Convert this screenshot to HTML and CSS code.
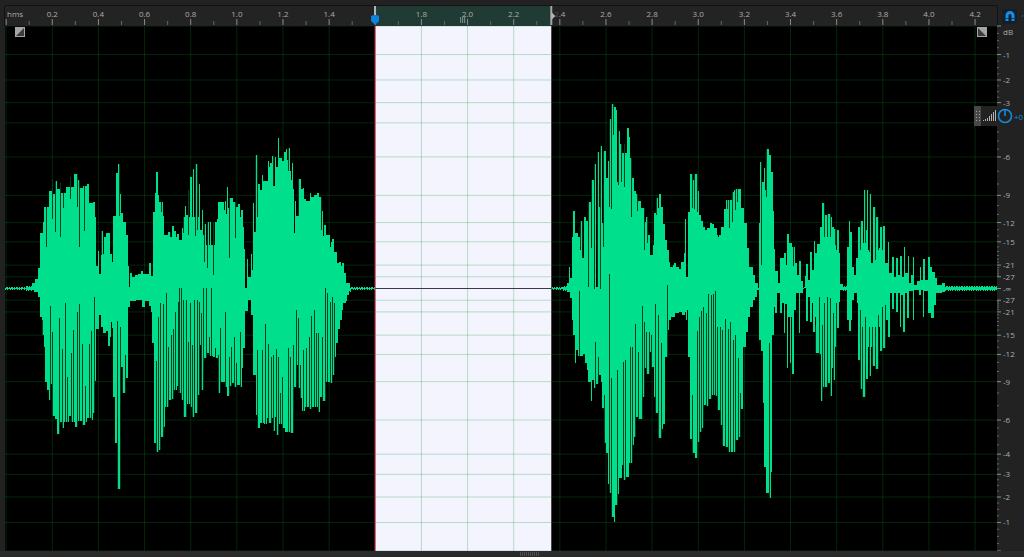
FILE: index.html
```html
<!DOCTYPE html>
<html lang="en">
  <head>
    <meta charset="UTF-8" />
    <title>Waveform editor</title>
    <link rel="stylesheet" href="styles.css">
  </head>
  <body>
    <main class="editor">
      <svg class="ruler" id="ruler" role="img" aria-label="Time ruler"></svg>

      <div class="corner">
        <button class="snap" aria-label="Toggle snapping">
          <svg width="12" height="12" viewBox="0 0 12 12">
            <path d="M3 11V5.500a3 3 0 0 1 6 0V11" fill="none" stroke="#168ee8" stroke-width="3" />
            <path d="M1 8.500h10" stroke="#13202b" stroke-width="0.6" />
          </svg>
        </button>
        <span class="corner-mark">‘</span>
      </div>

      <section class="plot">
        <svg class="layer" id="back"></svg>
        <svg class="layer" id="wave" viewBox="5 26 992 525" preserveAspectRatio="none" role="img" aria-label="Audio waveform"></svg>
        <svg class="layer" id="grid"></svg>
        <button class="fade fade-in" aria-label="Fade in">
          <svg width="10" height="10" viewBox="0 0 10 10"><path d="M0 0h10v10H0z" fill="#a5a5a5" /><path d="M9 1v8H1z" fill="#3c3c3c" /></svg>
        </button>
        <button class="fade fade-out" aria-label="Fade out">
          <svg width="10" height="10" viewBox="0 0 10 10"><path d="M0 0h10v10H0z" fill="#a5a5a5" /><path d="M1 1v8h8z" fill="#3c3c3c" /></svg>
        </button>
      </section>

      <svg class="scale" id="scale" role="img" aria-label="Decibel scale"></svg>

      <footer class="bottom">
        <svg width="19" height="4" viewBox="0 0 19 4">
          <path d="M0 1h19M0 3h19" stroke="#777" stroke-dasharray="1 1" />
        </svg>
      </footer>

      <div class="hud">
        <span class="hud-grip">
          <svg width="4" height="10" viewBox="0 0 4 10"><path d="M.5 0v10M3.500 0v10" stroke="#a0a0a0" stroke-dasharray="1 2" /></svg>
        </span>
        <span class="hud-level">
          <svg width="14" height="12" viewBox="0 0 14 12"><path d="M1.500 12v-1M3.500 12v-2M5.500 12v-3M7.500 12v-5M9.500 12v-7M11.500 12v-9M13.500 12V1" stroke="#b0b0b0" /></svg>
        </span>
        <button class="dial" aria-label="Adjust volume">
          <svg width="16" height="16" viewBox="0 0 16 16"><circle cx="8" cy="8" r="6.500" fill="none" stroke="#128ce0" stroke-width="1.600" /><path d="M8 2v6" stroke="#128ce0" stroke-width="1.600" /></svg>
        </button>
        <span class="gain">+0</span>
      </div>
    </main>

    <script src="wave.js"></script>
  </body>
</html>
```

FILE: styles.css
```css
* {
  box-sizing: border-box;
}

body {
  margin: 0;
  background-color: #222222;
  color: #a6a6a6;
  font-family: "Open Sans", "Noto Sans", sans-serif;
  font-size: 8px;
}

button {
  display: flex;
  align-items: center;
  justify-content: center;
  margin: 0;
  padding: 0;
  border: none;
  background: none;
}

.editor {
  position: relative;
  display: grid;
  grid-template-columns: 1fr 27px;
  grid-template-rows: 20px 1fr 6px;
  height: 100vh;
  padding: 6px 0 0 5px;
  overflow: hidden;
}

.ruler,
.scale {
  display: block;
  width: 100%;
  height: 100%;
  overflow: visible;
}

.ruler {
  background-color: #232323;
  box-shadow: 0 -1px #121212, -1px 0 #121212, 1px 0 #121212;
}

.ruler text,
.scale text {
  fill: #acacac;
}

.ruler text {
  text-anchor: middle;
}

.ruler .unit {
  text-anchor: start;
}

.tick {
  stroke: #8c8c8c;
}

.minor {
  stroke: #666666;
}

.corner {
  display: flex;
  align-items: center;
  gap: 5px;
  padding-left: 5px;
  overflow: hidden;
}

.snap {
  flex: none;
  width: 15px;
  height: 15px;
  border-radius: 2px;
  background-color: #13202b;
}

.corner-mark {
  color: #128ce0;
}

.plot {
  position: relative;
  background-color: #000000;
}

.layer {
  position: absolute;
  inset: 0;
  width: 100%;
  height: 100%;
}

.gridline {
  stroke: #00961e;
  stroke-opacity: 0.26;
}

.fade {
  position: absolute;
  top: 1px;
}

.fade-in {
  left: 10px;
}

.fade-out {
  right: 10px;
}

.bottom {
  grid-column: 1 / 3;
  display: flex;
  align-items: center;
  justify-content: center;
  padding-left: 34px;
  background-color: #2b2b2b;
  margin-left: -5px;
}

.hud {
  position: absolute;
  top: 106px;
  right: 0;
  display: flex;
  align-items: center;
  width: 50px;
  height: 20px;
  overflow: hidden;
  background-color: #222222;
}

.hud-grip {
  flex: none;
  display: flex;
  align-items: center;
  justify-content: center;
  width: 7px;
  height: 20px;
  background-color: #484848;
}

.hud-level {
  flex: none;
  padding-left: 1px;
}

.dial {
  flex: none;
  width: 18px;
}

.gain {
  flex: none;
  color: #128ce0;
}
```

FILE: wave.js
```js
const NS = "http://www.w3.org/2000/svg";
const DURATION = 4.3;
const SELECTION = [1.604, 2.368];

// outline of the wave: "x,y" steps, each one held until the next
const TOP = `5,287 26,286 32,283 35,279 38,268 40,233 43,222 44,207 49,191 52,179 53,194 55,181 57,189 60,183 61,193
66,187 70,177 71,187 74,174 77,180 79,188 83,186 87,184 89,203 93,202 95,217 96,266 98,251 99,274 101,231 103,254
104,237 106,233 110,254 112,262 113,216 116,173 118,164 120,194 121,213 123,222 126,235 128,266 129,287 130,273
132,277 135,275 138,274 141,271 143,274 149,263 151,276 153,212 155,193 156,172 158,195 159,202 161,202 163,216
164,235 168,232 170,237 172,226 174,231 176,237 177,234 179,240 182,228 183,217 185,206 186,215 188,190 189,217
190,177 192,217 193,169 194,217 196,164 197,217 199,184 200,230 202,210 203,235 205,224 206,245 208,222 209,245
210,222 211,245 213,223 214,245 215,222 217,219 218,202 224,210 225,201 226,214 227,187 228,208 230,198 233,202
236,207 238,204 240,217 241,210 243,227 244,249 245,288 247,259 248,277 251,254 252,270 253,203 254,232 256,155
257,217 258,184 260,190 262,175 263,181 268,161 269,167 270,163 272,156 273,186 275,157 276,167 278,138 279,158
282,161 284,152 286,149 287,160 289,148 290,171 291,180 292,163 293,189 294,233 295,201 296,216 299,179 301,189
303,188 304,199 306,201 310,193 311,197 314,195 317,193 319,197 321,222 322,211 323,236 324,225 326,235 330,247
331,242 332,239 334,252 337,263 339,262 341,266 342,263 344,273 346,283 348,283 350,287 554,287 563,286 567,283
569,267 570,278 572,237 573,211 575,233 578,237 580,250 581,221 582,258 584,217 586,221 588,240 589,202 591,248
592,180 594,287 595,164 596,287 598,152 599,207 601,146 602,223 604,151 606,178 608,161 610,119 612,104 614,107
616,110 617,182 619,131 620,144 622,153 624,144 625,153 627,128 629,137 630,158 632,178 634,191 636,194 638,201
641,208 644,222 646,217 648,235 650,255 653,245 654,213 656,198 658,208 659,194 661,207 663,224 665,240 667,250
669,262 670,267 673,265 674,263 676,267 679,269 681,262 684,253 685,219 686,277 688,212 690,174 692,180 695,174
697,191 699,215 701,221 703,227 705,230 707,228 710,223 712,224 714,228 717,235 718,237 719,235 721,227 724,209
726,200 729,200 732,192 734,190 736,189 741,208 744,223 747,248 749,267 753,275 755,283 758,287 759,223 760,162
761,182 764,168 765,190 766,157 767,149 769,155 771,172 773,211 774,249 775,271 778,283 780,258 784,253 786,265
787,234 789,243 792,247 795,263 797,275 799,261 801,281 803,287 805,276 806,264 808,280 810,252 812,270 814,241
815,253 817,244 820,227 822,203 824,215 828,214 830,217 832,227 834,229 836,250 837,230 839,253 840,284 843,286
847,247 849,221 850,232 852,267 854,275 856,258 858,227 860,243 861,221 863,243 864,190 865,230 867,190 868,250
870,194 871,263 873,207 875,247 876,217 878,248 880,227 882,250 883,226 885,263 888,242 889,273 892,257 894,277
896,258 898,275 900,256 902,277 904,247 905,273 908,256 909,283 911,275 913,257 914,285 917,281 920,267 921,280
923,259 925,280 928,257 930,267 932,272 935,278 937,285 942,283 945,286 997,286`;

const BOTTOM = `5,289 26,290 34,292 38,297 40,317 42,335 44,347 45,382 47,390 49,400 50,384 52,416 55,419 57,434 60,422
62,428 64,422 69,416 71,422 75,427 77,421 83,425 85,422 87,418 92,420 93,413 95,381 96,329 99,315 101,327 103,333
106,331 108,346 110,337 111,322 112,328 113,397 115,443 117,417 118,489 120,404 121,367 123,393 125,355 126,378
128,307 130,301 136,300 142,307 145,301 149,306 151,312 152,343 154,443 156,452 158,450 161,437 163,427 165,407
169,400 172,399 174,390 177,386 179,393 182,400 184,417 187,404 190,407 192,417 194,345 195,413 198,395 200,345
201,390 203,370 204,358 207,353 210,356 213,357 215,348 216,358 218,393 220,382 225,387 227,396 229,386 232,383
234,387 237,385 240,387 242,368 243,348 245,311 248,300 251,315 253,375 256,415 258,428 260,423 264,424 267,418
269,423 272,418 273,431 275,417 277,435 279,424 282,428 285,432 288,432 291,433 293,413 294,387 296,365 298,388
300,398 302,411 305,407 309,409 311,407 318,412 320,397 323,401 326,382 330,383 332,375 334,357 336,343 338,329
340,320 342,310 343,303 346,301 347,295 349,291 351,289 554,289 563,290 567,292 570,298 572,320 573,335 575,363
576,350 578,356 583,354 585,363 587,370 588,382 591,401 592,380 594,388 596,384 598,375 601,382 602,408 604,431
605,443 606,453 608,484 609,447 610,493 612,517 614,522 615,505 618,494 619,478 622,465 624,480 626,477 629,463
632,445 634,437 636,417 638,419 642,397 644,368 647,374 649,352 651,367 654,397 656,413 658,438 661,429 663,424
665,357 668,330 669,320 671,317 675,313 679,312 682,315 685,312 686,320 687,310 688,357 690,439 692,453 695,458
697,442 699,432 702,428 703,405 706,406 708,399 711,395 716,396 718,410 721,425 723,446 726,447 729,452 735,440
738,437 740,409 743,347 746,332 748,317 750,307 753,300 755,297 757,290 759,340 761,351 763,403 764,467 766,493
769,498 771,472 772,335 774,307 775,313 777,293 780,313 782,303 784,333 785,304 787,368 788,317 790,363 791,317
792,374 794,310 796,293 799,333 800,293 803,288 806,321 808,297 810,322 812,303 813,332 815,317 816,353 819,354
821,401 823,387 827,383 830,396 832,368 833,380 835,347 837,328 839,302 840,290 847,320 849,331 851,320 852,300
854,293 857,303 858,360 860,350 861,389 863,397 865,365 866,379 868,347 869,376 871,347 873,366 875,347 876,369
878,327 880,351 882,310 883,348 885,320 888,337 890,293 892,309 894,293 896,312 898,293 900,327 901,295 903,332
905,293 907,318 909,291 913,320 914,290 919,295 921,290 923,317 924,291 928,313 931,318 934,305 936,293 942,292
945,290 997,289`;

// thin gaps between peaks: "x,y", cut from the outline to y
const TOP_GAPS = `46,247 52,219 55,232 60,237 63,208 70,199 77,207 79,247 84,231 101,255 119,216 161,212 170,237 183,233
188,235 195,236 197,230 204,262 207,268 213,275 229,258 235,238 255,232 257,217 273,186 288,171 298,216 321,230
580,247 582,258 588,287 591,248 594,289 597,287 600,289 603,247 609,207 611,209 613,135 618,185 621,182 624,187
631,217 637,211 644,250 647,243 656,215 692,208 694,209 697,212 727,209 729,228 732,222 735,210 737,202 761,265
766,197 793,266 824,237 827,237 830,237 835,245 860,250 865,243 869,252 875,260 878,250 882,250`;

const BOTTOM_GAPS = `42,320 50,306 52,332 59,318 62,349 65,303 67,377 71,353 73,330 77,312 79,304 82,344 85,386 89,344
91,331 94,297 117,321 120,327 122,367 125,355 156,361 158,317 160,303 163,304 166,293 168,347 171,335 173,329
175,312 178,302 179,288 181,288 183,300 186,300 188,342 190,303 192,345 194,300 197,300 199,302 201,313 203,288
206,288 209,337 211,288 215,348 218,355 220,328 225,312 229,357 231,347 234,337 236,363 240,332 257,350 262,350
265,324 268,344 271,357 273,355 276,349 278,357 280,393 282,377 288,348 290,357 293,345 296,310 298,318 300,365
303,350 306,348 309,337 311,316 314,310 316,333 318,333 322,337 325,288 327,293 330,302 332,297 334,303 579,291
595,342 598,357 604,395 609,274 611,378 617,370 623,362 625,360 630,347 632,347 635,324 638,352 642,306 644,322
646,332 649,332 651,335 655,304 658,315 661,343 667,285 692,395 697,331 699,317 701,311 703,307 706,313 708,294
711,295 713,294 715,291 717,327 720,327 722,330 725,319 728,329 730,322 733,340 735,335 738,358 740,393 769,343
815,325 819,297 822,325 824,303 827,297 830,298 833,313 836,303 860,310 862,327 865,317 869,327 872,327 875,327
878,315 882,307 885,305`;

function draw(parent, name, attrs, text) {
  const el = document.createElementNS(NS, name);
  for (const key in attrs) el.setAttribute(key, attrs[key]);
  if (text) el.textContent = text;
  parent.appendChild(el);
  return el;
}

function points(data) {
  return data.trim().split(/\s+/).map((p) => p.split(",").map(Number));
}

function timeX(seconds) {
  return (seconds / DURATION) * 100 + "%";
}

// side is -1 for the upper half and 1 for the lower half
function dbY(db, side) {
  return 50 + side * 50 * Math.pow(10, -db / 20) + "%";
}

function drawRuler() {
  const ruler = document.getElementById("ruler");
  const [start, end] = SELECTION;
  draw(ruler, "rect", { x: timeX(start), y: 0, width: timeX(end - start), height: "100%", fill: "#203b33" });
  draw(ruler, "text", { x: 2, y: 11, class: "unit" }, "hms");
  for (let i = 0; i <= 42; i++) {
    const x = timeX(i / 10 + 0.005);
    const major = i % 2 === 0;
    draw(ruler, "line", { x1: x, x2: x, y1: major ? 13 : 15, y2: 19, class: major ? "tick" : "tick minor" });
    if (major && i > 0 && i !== 16) draw(ruler, "text", { x, y: 11 }, (i / 10).toFixed(1));
  }

  const left = draw(ruler, "svg", { x: timeX(start), overflow: "visible" });
  draw(left, "path", { d: "M0 0v9", stroke: "#b5b5b5", "stroke-width": 2 });
  draw(left, "path", { d: "M-4 10q4-2 8 0v5l-4 4-4-4z", fill: "#0c83dc" });
  const right = draw(ruler, "svg", { x: timeX(end), overflow: "visible" });
  draw(right, "rect", { x: 2, y: 3, width: 6, height: 9, fill: "#232323", opacity: 0.7 });
  draw(right, "path", { d: "M0 0v19", stroke: "#a5a5a5", "stroke-width": 2 });
  draw(right, "path", { d: "M0 6l4 4-4 4z", fill: "#b5b5b5" });
  const middle = draw(ruler, "svg", { x: timeX((start + end) / 2), overflow: "visible" });
  draw(middle, "path", { d: "M-2.500 11v6M-.5 11v6M1.500 10v7", stroke: "#7f948b" });
}

function drawPlot() {
  const back = document.getElementById("back");
  const grid = document.getElementById("grid");
  const [start, end] = SELECTION;
  draw(back, "rect", { x: timeX(start), y: 0, width: timeX(end - start), height: "100%", fill: "#f4f4ff" });

  for (let i = 0; i <= 21; i++) {
    const x = timeX(i / 5 + 0.005);
    draw(back, "line", { x1: x, x2: x, y1: 0, y2: "100%", class: "gridline" });
  }
  for (const side of [-1, 1]) {
    for (const db of [0, 1, 2, 3, 4, 6, 9, 12, 15, 21, 27]) {
      const y = dbY(db, side);
      draw(back, "line", { x1: 0, x2: "100%", y1: y, y2: y, class: "gridline" });
    }
  }

  draw(grid, "line", { x1: timeX(start), x2: timeX(end), y1: "50%", y2: "50%", stroke: "#343b49" });
  draw(grid, "line", { x1: timeX(start), x2: timeX(start), y1: 0, y2: "100%", stroke: "#d51c35" });
}

function edgeAt(list, x) {
  let y = list[0][1];
  for (const p of list) {
    if (p[0] > x) break;
    y = p[1];
  }
  return y;
}

function drawWave() {
  const wave = document.getElementById("wave");
  const top = points(TOP);
  const bottom = points(BOTTOM);

  for (const [from, to] of [[5, 375], [552, 997]]) {
    let d = "";
    for (let x = from; x < to; x++) {
      let y1 = edgeAt(top, x);
      let y2 = edgeAt(bottom, x);
      // the quiet parts ripple a little round the centre line
      if (y2 - y1 < 5) {
        y1 += (x * 7) % 5 < 2 ? 1 : 0;
        y2 += (x * 3) % 7 < 3 ? 1 : 0;
      }
      d += `M${x} ${y1}h1V${y2}h-1z`;
    }
    draw(wave, "path", { d, fill: "#00df8b", "shape-rendering": "crispEdges" });
  }

  let gaps = "";
  for (const [x, y] of points(TOP_GAPS)) {
    const edge = Math.min(edgeAt(top, x - 1), edgeAt(top, x), edgeAt(top, x + 1));
    if (edge < y) gaps += `M${x} ${edge}h1V${y}h-1z`;
  }
  for (const [x, y] of points(BOTTOM_GAPS)) {
    const edge = Math.max(edgeAt(bottom, x - 1), edgeAt(bottom, x), edgeAt(bottom, x + 1));
    if (edge > y) gaps += `M${x} ${y}h1V${edge}h-1z`;
  }
  draw(wave, "path", { d: gaps, fill: "#00301a", "fill-opacity": 0.92 });
}

function drawScale() {
  const scale = document.getElementById("scale");
  const labels = [1, 2, 3, 4, 6, 9, 12, 15, 21, 27];
  draw(scale, "text", { x: 6, y: 9 }, "dB");
  draw(scale, "text", { x: 6, y: "50%", dy: 3 }, "-∞");
  draw(scale, "line", { x1: 0, x2: 4, y1: "50%", y2: "50%", class: "tick" });

  for (const side of [-1, 1]) {
    for (let db = 0; db <= 27; db += db < 4 ? 0.25 : db < 6 ? 0.5 : 1) {
      const y = dbY(db, side);
      const major = db === 0 || labels.includes(db);
      draw(scale, "line", { x1: 0, x2: major ? 4 : 2, y1: y, y2: y, class: major ? "tick" : "tick minor" });
    }
    for (const db of labels) {
      // the volume control covers the upper -4
      if (db === 4 && side < 0) continue;
      draw(scale, "text", { x: 6, y: dbY(db, side), dy: 3 }, "-" + db);
    }
  }
}

drawRuler();
drawPlot();
drawWave();
drawScale();
```
